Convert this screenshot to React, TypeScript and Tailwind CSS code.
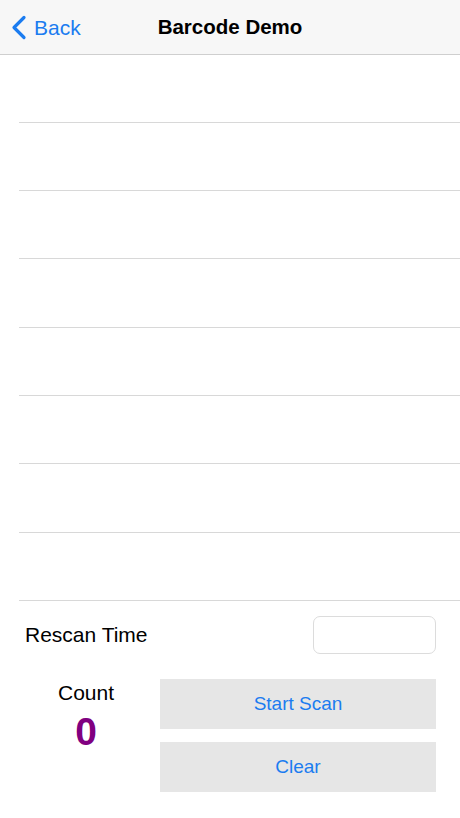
import React from 'react'

const ROW_HEIGHTS = ['h-[68px]', 'h-[68px]', 'h-[68px]', 'h-[69px]', 'h-[68px]', 'h-[68px]', 'h-[69px]', 'h-[68px]']

export default function App() {
  return (
    <div className="w-[460px] h-[818px] bg-white overflow-hidden" style={{ fontFamily: '"Liberation Sans", Arial, sans-serif' }}>
      {/* Nav bar */}
      <div className="relative h-[55px] bg-[#f7f7f7] border-b border-[#cfcfcf] flex items-center">
        <button className="flex items-center pl-[11px] text-[#1b7cf0]">
          <svg width="16" height="25" viewBox="0 0 16 25" className="mt-[1px]">
            <path d="M13 2.5 L3 12.5 L13 22.5" fill="none" stroke="currentColor" strokeWidth="3.2" strokeLinecap="round" strokeLinejoin="round" />
          </svg>
          <span className="ml-[7px] text-[21px] leading-none">Back</span>
        </button>
        <div className="absolute left-0 right-0 text-center pointer-events-none">
          <span className="text-[20.5px] font-bold text-black">Barcode Demo</span>
        </div>
      </div>

      {/* Table rows */}
      <div>
        {ROW_HEIGHTS.map((h, i) => (
          <div key={i} className={`${h} pl-[19px]`}>
            <div className="h-full border-b border-[#d8d8d8]" />
          </div>
        ))}
      </div>

      {/* Rescan time */}
      <div className="flex items-center justify-between pl-[25px] pr-[24px] pt-[15px]">
        <span className="text-[21px] text-black">Rescan Time</span>
        <input className="w-[123px] h-[38px] rounded-[7px] border border-[#dcdcdc] bg-white outline-none" />
      </div>

      {/* Count + buttons */}
      <div className="flex pt-[25px] pr-[24px]">
        <div className="w-[160px] flex flex-col items-center pl-[12px]">
          <span className="text-[21px] text-black leading-none mt-[3px]">Count</span>
          <span className="text-[39px] font-bold text-[#800080] leading-none mt-[9px]">0</span>
        </div>
        <div className="flex-1 flex flex-col gap-[13px]">
          <button className="h-[50px] bg-[#e6e6e6] text-[#1b7cf0] text-[19px]">Start Scan</button>
          <button className="h-[50px] bg-[#e6e6e6] text-[#1b7cf0] text-[19px]">Clear</button>
        </div>
      </div>
    </div>
  )
}
